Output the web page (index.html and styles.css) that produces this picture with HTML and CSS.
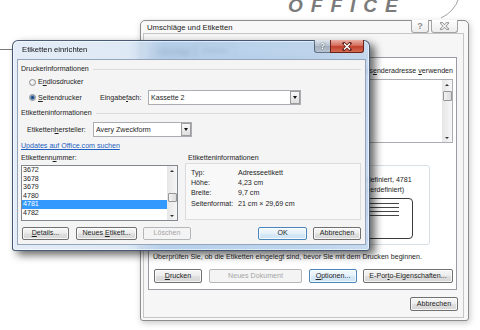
FILE: index.html
```html
<!DOCTYPE html>
<html lang="de">
<head>
<meta charset="utf-8">
<title>Etiketten einrichten</title>
<link rel="stylesheet" href="styles.css">
</head>
<body>
<div class="brand">OFFICE</div>
<svg class="deco" width="480" height="330" viewBox="0 0 480 330">
  <path d="M459 -2 Q 454 12 441 18" fill="none" stroke="#8a8a8a" stroke-width="0.8"/>
  <line x1="0" y1="49.5" x2="13" y2="49.5" stroke="#7a7a7a" stroke-width="1"/>
</svg>

<div class="win back">
  <div class="titlebar">
    <span class="title">Umschläge und Etiketten</span>
    <div class="caps">
      <span class="cap help">?</span>
      <span class="cap close"><svg width="11" height="8" viewBox="0 0 11 8"><path d="M2.5 1 L8.5 7 M8.5 1 L2.5 7" stroke="#8c8c8c" stroke-width="2.6" stroke-linecap="square"/><path d="M2.5 1 L8.5 7 M8.5 1 L2.5 7" stroke="#fafafa" stroke-width="1.1"/></svg></span>
    </div>
  </div>
  <div class="client">
    <div class="tabs"><span class="tab">Umschläge</span><span class="tab sel">Etiketten</span></div>
    <div class="tabpage">
      <div class="addrhead"><span>Adresse:</span><span class="chk"><span class="box"></span><span>Abs<u>e</u>nderadresse <u>v</u>erwenden</span></span></div>
      <div class="addr">
        <div class="addrtext"></div>
        <div class="vscroll"><span class="sb up"></span><span class="track"><span class="thumb t1"></span></span><span class="sb down"></span></div>
      </div>
      <div class="mid">
        <div class="printgroup">
          <div class="gtitle">Drucken</div>
          <div class="opt"><span class="radio on"></span><span>Ganze Seite mit demselben Etikett</span></div>
          <div class="opt"><span class="radio"></span><span>Einzelnes Etikett</span></div>
        </div>
        <div class="etikett">
          <div>Benutzerdefiniert, 4781</div>
          <div>(Benutzerdefiniert)</div>
          <div class="preview"><span></span><span></span><span></span><span></span></div>
        </div>
      </div>
      <p class="hint">Überprüfen Sie, ob die Etiketten eingelegt sind, bevor Sie mit dem Drucken beginnen.</p>
      <div class="btnrow">
        <span class="btn w48"><u>D</u>rucken</span>
        <span class="btn dis w93">Neues Dokument</span>
        <span class="btn def w48"><u>O</u>ptionen...</span>
        <span class="btn w90">E-Por<u>t</u>o-Eigenschaften...</span>
      </div>
    </div>
    <div class="footer"><span class="btn w48">Abbrechen</span></div>
  </div>
</div>

<div class="win front">
  <div class="titlebar">
    <span class="title">Etiketten einrichten</span>
    <div class="caps">
      <span class="cap help">?</span>
      <span class="cap close"><svg width="12" height="9" viewBox="0 0 12 9"><path d="M3 1.5 L9 7.5 M9 1.5 L3 7.5" stroke="#5a1d15" stroke-width="3" stroke-linecap="square"/><path d="M3 1.5 L9 7.5 M9 1.5 L3 7.5" stroke="#ffffff" stroke-width="1.5"/></svg></span>
    </div>
  </div>
  <div class="client">
    <div class="row sep r1"><span>Druckerinformationen</span></div>
    <div class="row r2"><span class="ritem"><span class="radio"></span><span>E<u>n</u>dlosdrucker</span></span></div>
    <div class="row r3">
      <span class="ritem w71"><span class="radio on"></span><span><u>S</u>eitendrucker</span></span>
      <span class="lbl w48">Eingabe<u>f</u>ach:</span>
      <span class="combo w153"><span>Kassette 2</span><span class="dd"></span></span>
    </div>
    <div class="row sep r4"><span>Etiketteninformationen</span></div>
    <div class="row r5">
      <span class="lbl w66">Etiketten<u>h</u>ersteller:</span>
      <span class="combo w99"><span>Avery Zweckform</span><span class="dd"></span></span>
    </div>
    <div class="row r6"><span class="link">Updates auf Office.com suchen</span></div>
    <div class="row r7"><span class="lbl w167">Etikettenn<u>u</u>mmer:</span><span>Etiketteninformationen</span></div>
    <div class="row r8">
      <div class="list">
        <div class="items">
          <div>3672</div><div>3678</div><div>3679</div><div>4780</div><div class="selrow">4781</div><div>4782</div>
        </div>
        <div class="vscroll"><span class="sb up"></span><span class="track"><span class="thumb t2"></span></span><span class="sb down"></span></div>
      </div>
      <div class="info">
        <span>Typ:</span><span>Adresseetikett</span>
        <span>Höhe:</span><span>4,23 cm</span>
        <span>Breite:</span><span>9,7 cm</span>
        <span>Seitenformat:</span><span>21 cm × 29,69 cm</span>
      </div>
    </div>
    <div class="row r9">
      <span class="btn w47"><u>D</u>etails...</span>
      <span class="btn w61">Neues <u>E</u>tikett...</span>
      <span class="btn dis w48 lo">Löschen</span>
      <span class="spacer"></span>
      <span class="btn def w49">OK</span>
      <span class="btn w48 ab">Abbrechen</span>
    </div>
  </div>
</div>
</body>
</html>
```

FILE: styles.css
```css
* { box-sizing: border-box; margin: 0; padding: 0; }
html, body { width: 480px; height: 330px; overflow: hidden; background: #fff; }
body {
  position: relative;
  font-family: "Liberation Sans", Arial, sans-serif;
  font-size: 7.1px;
  line-height: 10px;
  color: #1e1e1e;
}
u { text-decoration: underline; text-underline-offset: 1px; text-decoration-thickness: 0.6px; }

.brand {
  position: absolute; left: 288px; top: -4px;
  font: italic bold 19px/19px "Liberation Sans", Arial, sans-serif;
  letter-spacing: 8px; color: #7b7b7b;
}
.deco { position: absolute; left: 0; top: 0; }

.win { position: absolute; display: flex; flex-direction: column; }
.titlebar { position: relative; flex: none; }
.caps { position: absolute; top: -1px; display: flex; }
.cap { display: flex; align-items: center; justify-content: center; height: 13px; }

/* ---------- back window ---------- */
.back {
  left: 140px; top: 20px; width: 329px; height: 301px;
  border: 1px solid #8c8c8c; border-radius: 5px 5px 3px 3px;
  background: #f8f8f8;
  padding: 0 4px 2px 2px;
  box-shadow: 1px 2px 6px rgba(0,0,0,.22);
}
.back .titlebar { height: 12px; }
.back .title { position: absolute; left: 4px; top: 2px; font-size: 7.7px; color: #222; }
.back .caps { right: 6px; gap: 2px; }
.back .cap { border: 1px solid #a3a3a3; border-top: none; border-radius: 0 0 3px 3px;
  background: linear-gradient(#fefefe, #ececec); color: #8d8d8d; font-size: 9px; font-weight: bold; }
.back .cap.help { width: 18px; }
.back .cap.close { width: 27px; }
.back .client {
  flex: 1; display: flex; flex-direction: column;
  border: 1px solid #c6c6c6; background: #f6f6f6;
  padding: 0 6px 0 4px;
}
.tabs { height: 23px; display: flex; align-items: flex-end; padding-left: 2px; flex: none; }
.tab { height: 11px; padding: 0 5px 0 4px; border: 1px solid #9a9ca3; border-bottom: none;
  background: linear-gradient(#f5f5f5, #e3e3e3); line-height: 10px; }
.tab.sel { height: 13px; background: #fff; line-height: 12px; }
.tabpage {
  height: 233px; flex: none; border: 1px solid #9a9ca3; background: #fff;
  padding: 0 3px 0 4px; display: flex; flex-direction: column;
}
.addrhead { margin-top: 8px; height: 10px; display: flex; justify-content: space-between; align-items: center; }
.chk { display: flex; align-items: center; white-space: nowrap; }
.box { width: 7px; height: 7px; border: 1px solid #8e8f8f; background: linear-gradient(135deg, #dcdcdc, #fff); margin-right: 3px; }
.addr { margin-top: 3px; height: 64px; border: 1px solid #abadb3; display: flex; background: #fff; }
.addrtext { flex: 1; }
.mid { margin-top: 22px; height: 80px; display: flex; gap: 6px; }
.printgroup { width: 161px; border: 1px solid #d5dfe5; border-radius: 3px; padding: 4px 6px; }
.gtitle { margin-bottom: 4px; }
.opt { display: flex; align-items: center; height: 11px; }
.opt .radio { margin-right: 3px; }
.etikett {
  width: 110px; border: 1px solid #d5dfe5; border-radius: 3px;
  padding-top: 10px; text-align: center; line-height: 9.5px;
  display: flex; flex-direction: column; align-items: center;
}
.preview {
  margin-top: 3px; width: 76px; height: 41px; border: 1px solid #3a3a3a;
  border-radius: 0 4px 4px 0; background: #fff;
  display: flex; flex-direction: column; align-items: flex-start; padding-top: 4px; gap: 3px;
}
.preview span { display: block; width: 61px; height: 1px; background: #454545; }
.hint { margin-top: 7px; height: 10px; white-space: nowrap; }
.btnrow { margin-top: 7px; height: 14px; display: flex; gap: 7px; padding-left: 1px; }
.btnrow .btn { line-height: 12px; }
.btnrow .w90 { margin-left: -1px; }
.footer { flex: 1; display: flex; justify-content: flex-end; align-items: flex-start; padding-top: 7px; margin-right: -1px; }
.footer .btn { height: 14px; line-height: 12px; }

/* ---------- buttons / widgets ---------- */
.btn {
  display: block; height: 100%; flex: none;
  text-align: center; line-height: 11px;
  border: 1px solid #707070; border-radius: 2px;
  background: linear-gradient(#f7f7f7 0, #ececec 48%, #dfdfdf 52%, #d6d6d6 100%);
  box-shadow: inset 0 0 0 1px rgba(255,255,255,.75);
  white-space: nowrap; color: #1e1e1e;
}
.btn.def { border-color: #4a86bd; background: linear-gradient(#f3f9fd, #e4f0f9 50%, #d6e9f7 52%, #cde3f4); }
.btn.dis { border-color: #b3b7ba; background: #f4f4f4; color: #a4a4a4; box-shadow: none; }
.w47 { width: 47px; } .w48 { width: 48px; } .w49 { width: 49px; } .w61 { width: 61px; }
.w66 { width: 66px; } .w71 { width: 71px; } .w90 { width: 90px; } .w93 { width: 93px; }
.w99 { width: 99px; } .w153 { width: 153px; } .w167 { width: 167px; }

.radio {
  width: 7px; height: 7px; border-radius: 50%; flex: none;
  border: 1px solid #8e8f8f;
  background: radial-gradient(circle at 40% 40%, #ffffff, #d4d4d4);
}
.radio.on { background: radial-gradient(circle, #17365f 0, #2b5c94 1.2px, #8fb3d9 2.4px, #eef2f6 3.2px); }

.combo {
  height: 15px; display: flex; align-items: center; justify-content: space-between;
  border: 1px solid #abadb3; background: #fff; padding-left: 2px; flex: none; white-space: nowrap;
}
.dd {
  width: 10px; height: 13px; border: 1px solid #9c9c9c;
  background: linear-gradient(#f8f8f8, #dedede);
  display: flex; align-items: center; justify-content: center;
}
.dd::after { content: ""; border-top: 3px solid #111; border-left: 2.5px solid transparent; border-right: 2.5px solid transparent; }

.vscroll { width: 10px; flex: none; display: flex; flex-direction: column; background: linear-gradient(90deg, #e6e6e6, #f6f6f6); }
.sb { height: 9px; display: flex; align-items: center; justify-content: center; flex: none; }
.sb.up::after { content: ""; border-bottom: 2.5px solid #333; border-left: 2px solid transparent; border-right: 2px solid transparent; }
.sb.down::after { content: ""; border-top: 2.5px solid #333; border-left: 2px solid transparent; border-right: 2px solid transparent; }
.track { flex: 1; position: relative; }
.thumb { display: block; height: 9px; margin: 0 0.5px; border: 1px solid #979797; border-radius: 1px; background: linear-gradient(90deg, #f3f3f3, #dcdcdc); }
.thumb.t1 { margin-top: 2px; height: 10px; }
.thumb.t2 { margin-top: 18px; }

/* ---------- front dialog ---------- */
.front {
  left: 12px; top: 40px; width: 358px; height: 211px;
  border: 1px solid rgba(35,55,85,.8); border-radius: 6px 6px 3px 3px;
  padding: 0 3px 5px 4px;
  background: linear-gradient(90deg, rgba(222,233,245,.82) 0, rgba(214,228,243,.82) 115px, rgba(168,198,230,.82) 150px, rgba(176,204,233,.82) 300px, rgba(190,212,236,.85) 100%);
  -webkit-backdrop-filter: blur(2.2px);
  backdrop-filter: blur(2.2px);
  box-shadow: 5px 4px 8px rgba(0,0,0,.6), inset 0 0 0 1px rgba(255,255,255,.55);
}
.front .titlebar { height: 18px; }
.front .title { position: absolute; left: 5px; top: 4px; font-size: 7.7px; color: #111; }
.front .caps { right: 2px; }
.front .cap.help { width: 16px; border: 1px solid rgba(50,70,95,.7); border-top: none; border-right: none; border-radius: 0 0 0 3px;
  background: linear-gradient(#dfe5ec, #b4bfcb 50%, #a3afbd 52%, #b8c3cf); color: #fff; font-size: 8.5px; font-weight: bold;
  text-shadow: 0 0 1px #44505e, 0 0 1px #44505e; }
.front .cap.close { width: 34px; border: 1px solid #6b2318; border-top: none; border-radius: 0 0 3px 0;
  background: linear-gradient(#eab1a5, #d66f5e 45%, #c2402c 55%, #d46b52); }
.front .client {
  flex: 1; display: flex; flex-direction: column;
  border: 1px solid rgba(70,100,140,.55);
  background: #f4f4f4;
  padding: 0 4px 0 3px;
}
.row { display: flex; align-items: center; flex: none; }
.sep { height: 10px; }
.sep::after { content: ""; flex: 1; height: 1px; background: #dcdcdc; margin-left: 4px; }
.r1 { margin-top: 4px; }
.r2 { margin-top: 3px; height: 10px; padding-left: 8px; }
.ritem { display: flex; align-items: center; flex: none; white-space: nowrap; }
.ritem .radio { margin-right: 2px; }
.r3 { margin-top: 3px; height: 15px; padding-left: 8px; }
.lbl { flex: none; white-space: nowrap; }
.r4 { margin-top: 3px; }
.r5 { margin-top: 4px; height: 15px; padding-left: 6px; }
.r6 { margin-top: 4px; height: 10px; }
.link { color: #1f5fbf; text-decoration: underline; text-decoration-thickness: 0.6px; text-underline-offset: 1px; }
.r7 { margin-top: 2px; height: 10px; }
.r8 { align-items: flex-start; height: 58px; }
.list {
  margin-top: 2px; width: 157px; height: 56px; flex: none;
  border: 1px solid #828790; background: #fff; display: flex;
}
.items { flex: 1; line-height: 8.5px; }
.items div { padding-left: 1px; }
.items .selrow { background: #3399ff; color: #fff; }
.info {
  margin-left: 7px; width: 177px; height: 57px;
  border: 1px solid #dcdcdc; background: #f8f8f8;
  padding: 4px 5px 0; display: grid; grid-template-columns: 47px auto; grid-auto-rows: 10.3px; align-items: center;
  line-height: 9px;
}
.r9 { margin-top: 6px; height: 13px; padding-left: 1px; gap: 7px; }
.r9 .lo { margin-left: -1px; }
.r9 .ab { margin-left: -1px; }
.spacer { flex: 1; }
```
